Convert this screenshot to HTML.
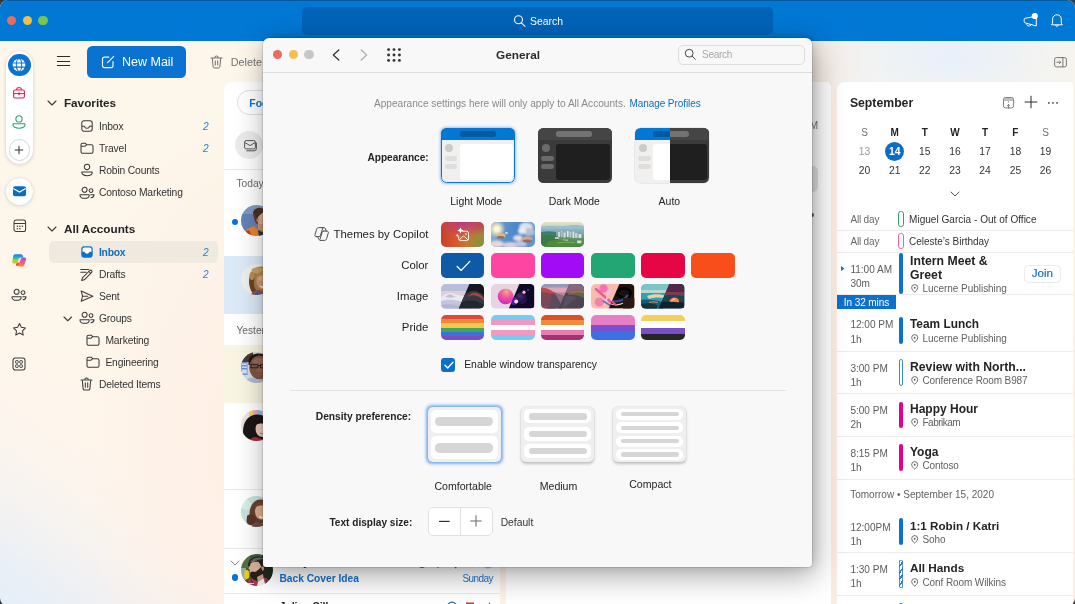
<!DOCTYPE html>
<html lang="en">
<head>
<meta charset="utf-8">
<title>Outlook - General</title>
<style>
*{box-sizing:border-box;margin:0;padding:0}
html,body{width:1075px;height:604px;overflow:hidden;background:#3a3a3a}
body{font-family:"Liberation Sans",sans-serif;color:#242424;position:relative}
.abs{position:absolute}
#win{will-change:transform;position:absolute;left:0;top:0;width:1075px;height:606px;border-radius:8px;overflow:hidden;
 background:
  radial-gradient(ellipse 170px 75px at 950px 58px,rgba(231,240,251,1),rgba(231,240,251,0) 100%),
  radial-gradient(ellipse 170px 330px at 245px 440px,rgba(255,237,227,.85),rgba(255,237,227,0) 100%),
  linear-gradient(90deg,rgba(250,228,218,0) 790px,rgba(250,230,220,.5) 826px,rgba(250,230,220,.5) 840px,rgba(250,228,218,0) 880px),
  linear-gradient(150deg,rgba(252,232,224,0) 50%,rgba(252,232,224,.4) 85%,rgba(252,232,224,.5) 100%),
  linear-gradient(35deg,#e5eef9 0%,#ebf0f6 4%,#f4f2f1 8%,#fcf5ee 12.5%,#fef6ec 17%,#fdf6ea 60%,#fcf6e9 100%);}
#tb{position:absolute;left:0;top:0;width:1075px;height:41px;background:#0078d4;box-shadow:inset 0 1px 0 rgba(20,40,60,.38)}
.tl{position:absolute;width:9.4px;height:9.4px;border-radius:50%}
#srch{position:absolute;left:302px;top:7px;width:471px;height:28px;border-radius:5px;background:#0063b8}
.t{position:absolute;white-space:nowrap;line-height:1}
svg{position:absolute;overflow:visible}
#ml{position:absolute;left:224px;top:82.3px;width:276px;height:530px;background:#fff;border-radius:8px 4px 0 0}
#rp{position:absolute;left:506px;top:82.3px;width:324.5px;height:530px;background:#fff;border-radius:4px 5px 0 0}
#cal{position:absolute;left:837px;top:82.3px;width:236px;height:530px;background:#fff;border-radius:8px 3px 0 0}
#dlg{position:absolute;left:263px;top:37.5px;width:549px;height:529px;background:#f8f8f8;border-radius:6px 6px 3px 3px;
 box-shadow:0 0 0 .5px rgba(0,0,0,.2),3px 8px 30px rgba(0,0,0,.36),2px 0 10px rgba(0,0,0,.12);overflow:hidden}
#dlg .bar{position:absolute;left:0;top:0;width:100%;height:35px;border-bottom:1px solid #dedede}

</style>
</head>
<body>
<div id="win">
<div id="tb">
<div class="tl" style="left:6.75px;top:16px;background:#e56d5b"></div>
<div class="tl" style="left:22.5px;top:16px;background:#f3bf42"></div>
<div class="tl" style="left:38.2px;top:16px;background:#74c64c"></div>
<div id="srch"></div>
<svg style="left:513px;top:14px;" width="14" height="14" viewBox="0 0 14 14" fill="none"><circle cx="5.5" cy="5.8" r="4" stroke="#fff" stroke-width="1.1"/><path d="M8.4 8.8 12 12.4" stroke="#fff" stroke-width="1.1" stroke-linecap="round"/></svg>
<div class="t" style="top:17.39px;font-size:10.4px;color:#fff;left:530px;">Search</div>
<svg style="left:1022px;top:12px;" width="16" height="16" viewBox="0 0 16 16" fill="none"><path d="M3.3 6.3 14.3 4.2V14L3.3 10.9A1.3 1.3 0 0 1 2.2 9.6V7.6A1.3 1.3 0 0 1 3.3 6.3z" stroke="#fff" stroke-width="1" stroke-linejoin="round"/><path d="M4.5 11.5c.2 1.6 1 2.5 2.3 2.5s2.2-.6 2.5-1.5" stroke="#fff" stroke-width="1"/><circle cx="12.8" cy="4" r="3.1" fill="#fff"/></svg>
<svg style="left:1049px;top:12px;" width="16" height="16" viewBox="0 0 16 16" fill="none"><path d="M3.6 11.2V7.1a4.35 4.35 0 0 1 8.7 0V11.2l1.1 1.6H2.5z" stroke="#fff" stroke-width="1" stroke-linejoin="round"/><path d="M6.5 13.1a1.5 1.5 0 0 0 2.9 0" stroke="#fff" stroke-width="1"/></svg>
</div>
<div class="abs" style="left:5.8px;top:50.8px;width:27.4px;height:113px;background:#fff;border-radius:13.7px;box-shadow:0 1px 4px rgba(0,0,0,.14),0 0 1px rgba(0,0,0,.12)"></div>
<div class="abs" style="left:8px;top:53.5px;width:22.5px;height:22.5px;background:#0a73d1;border-radius:50%"></div>
<svg style="left:12.2px;top:57.8px;" width="14" height="14" viewBox="0 0 14 14" fill="none"><circle cx="7" cy="7" r="6.3" fill="#fff"/><ellipse cx="7" cy="7" rx="2.7" ry="6.3" stroke="#0a73d1" stroke-width="1.05"/><path d="M.9 4.9h12.2M.9 9.1h12.2" stroke="#0a73d1" stroke-width="1.05"/></svg>
<svg style="left:12.2px;top:86px;" width="14" height="14" viewBox="0 0 14 14" fill="none"><rect x="1.6" y="4" width="10.8" height="8" rx="1.6" stroke="#e3194f" stroke-width="1.1"/><path d="M4.8 4V2.8a1 1 0 0 1 1-1h2.4a1 1 0 0 1 1 1V4" stroke="#e3194f" stroke-width="1.1"/><path d="M1.6 7.6h10.8" stroke="#e3194f" stroke-width="1"/><rect x="6.1" y="6.6" width="1.8" height="2.2" fill="#e3194f"/></svg>
<svg style="left:12.2px;top:114.5px;" width="14" height="14" viewBox="0 0 14 14" fill="none"><circle cx="7" cy="3.9" r="3.1" stroke="#2fa574" stroke-width="1.1"/><path d="M1.6 8.7h10.8a.6.6 0 0 1 .6.6v.3c0 2.1-2.4 3.6-6 3.6s-6-1.5-6-3.6v-.3a.6.6 0 0 1 .6-.6z" stroke="#2fa574" stroke-width="1.1" stroke-linejoin="round"/></svg>
<div class="abs" style="left:8.6px;top:139.3px;width:21.4px;height:21.4px;border:1px solid #d6d6d6;border-radius:50%;background:#fff"></div>
<svg style="left:14.2px;top:144.9px;" width="10" height="10" viewBox="0 0 10 10" fill="none"><path d="M5 .8v8.4M.8 5h8.4" stroke="#333" stroke-width="1"/></svg>
<div class="abs" style="left:5.7px;top:178px;width:27px;height:27px;background:#fff;border-radius:50%;box-shadow:0 1px 4px rgba(0,0,0,.14),0 0 1px rgba(0,0,0,.12)"></div>
<svg style="left:12.7px;top:186px;" width="13" height="11" viewBox="0 0 13 11" fill="none"><rect x="0" y="0.3" width="13" height="10" rx="2" fill="#0f6cbd"/><path d="M.3 2.6 6.5 6l6.2-3.4" stroke="#fff" stroke-width="1.1"/></svg>
<svg style="left:12.6px;top:218.8px;" width="13.6" height="13.6" viewBox="0 0 13.6 13.6" fill="none"><rect x="1" y="1" width="11.6" height="11.6" rx="2.2" stroke="#3a3a3a" stroke-width="1.05"/><path d="M1 4.5h11.6" stroke="#3a3a3a" stroke-width="1.05"/><circle cx="4.4" cy="7.2" r=".8" fill="#3a3a3a"/><circle cx="6.9" cy="7.2" r=".8" fill="#3a3a3a"/><circle cx="9.4" cy="7.2" r=".8" fill="#3a3a3a"/><circle cx="4.4" cy="9.8" r=".8" fill="#3a3a3a"/><circle cx="6.9" cy="9.8" r=".8" fill="#3a3a3a"/></svg>
<div class="abs" style="left:11.5px;top:253.3px;width:15.8px;height:13.6px;border-radius:6px;background:radial-gradient(closest-side,rgba(240,170,150,.35),rgba(240,170,150,0))"></div>
<svg style="left:12.2px;top:253.8px;" width="14.4" height="12.6" viewBox="0 0 14.4 12.6" fill="none"><defs><linearGradient id="cpa" x1="0" y1="0" x2="0" y2="1"><stop offset="0" stop-color="#1583ea"/><stop offset=".38" stop-color="#1fb7c4"/><stop offset=".68" stop-color="#9fd446"/><stop offset="1" stop-color="#fbb21c"/></linearGradient><linearGradient id="cpb" x1="0" y1="0" x2="0" y2="1"><stop offset="0" stop-color="#9a52f2"/><stop offset=".5" stop-color="#f0538f"/><stop offset="1" stop-color="#fb8f2e"/></linearGradient></defs>
<path d="M3.4.2h5.2c1.2 0 2.1.7 2.4 1.7l.6 1.9H8.6c-1 0-1.8.6-2.1 1.5l-.8 2.6C5.4 8.8 4.6 9.4 3.6 9.4H1.7C.7 9.4 0 8.5.3 7.5l1-5.8C1.6.8 2.4.2 3.4.2z" fill="url(#cpa)"/>
<path d="M5.2 8.4h2.6l-.6 2.2c-.3 1-1.1 1.6-2 1.5-1-.1-1.4-.9-1.2-1.8z" fill="#f4512c"/>
<path d="M11 12.4H7.4c-.5 0-.8-.4-.6-.9l2-6.6c.3-.9 1.1-1.5 2-1.5h1.9c1 0 1.7.9 1.4 1.9l-1.7 5.6c-.3.9-.9 1.5-1.4 1.5z" fill="url(#cpb)"/></svg>
<svg style="left:11.4px;top:287.5px;" width="16" height="14" viewBox="0 0 16 14" fill="none"><circle cx="5.6" cy="3.8" r="2.5" stroke="#3a3a3a" stroke-width="1.05"/><path d="M1 8.7h9.2v.5c0 1.9-1.8 3.1-4.6 3.1S1 11.1 1 9.2z" stroke="#3a3a3a" stroke-width="1.05" stroke-linejoin="round"/><circle cx="12" cy="4.6" r="1.9" stroke="#3a3a3a" stroke-width="1.05"/><path d="M11.8 8.7h3.2v.4c0 1.5-1.1 2.5-3 2.7" stroke="#3a3a3a" stroke-width="1.05" stroke-linecap="round" stroke-linejoin="round"/></svg>
<svg style="left:12px;top:322px;" width="15" height="15" viewBox="0 0 15 15" fill="none"><path d="M7.5 1.5 9.35 5.3l4.15.6-3 2.95.7 4.15L7.5 11.05 3.8 13l.7-4.15-3-2.95 4.15-.6z" stroke="#3a3a3a" stroke-width="1.05" stroke-linejoin="round"/></svg>
<svg style="left:12.4px;top:357px;" width="14" height="14" viewBox="0 0 14 14" fill="none"><rect x="1" y="1" width="12" height="12" rx="2.4" stroke="#3a3a3a" stroke-width="1.05"/><rect x="3.6" y="3.6" width="2.6" height="2.6" rx=".6" stroke="#3a3a3a" stroke-width=".95"/><rect x="7.8" y="3.6" width="2.6" height="2.6" rx=".6" stroke="#3a3a3a" stroke-width=".95"/><rect x="3.6" y="7.8" width="2.6" height="2.6" rx=".6" stroke="#3a3a3a" stroke-width=".95"/><rect x="7.8" y="7.8" width="2.6" height="2.6" rx=".6" stroke="#3a3a3a" stroke-width=".95"/></svg>
<svg style="left:57px;top:56px;" width="13" height="11" viewBox="0 0 13 11" fill="none"><path d="M.3 .5h12.4M.3 5.5h12.4M.3 9.5h12.4" stroke="#2b2b2b" stroke-width="1" stroke-linecap="round"/></svg>
<div class="abs" style="left:87px;top:46px;width:99px;height:31.5px;background:#0a73d1;border-radius:5.5px"></div>
<svg style="left:101px;top:55px;" width="14" height="14" viewBox="0 0 14 14" fill="none"><path d="M7.8 2.1H3.6A2.1 2.1 0 0 0 1.5 4.2v6.3a2.1 2.1 0 0 0 2.1 2.1H9.9a2.1 2.1 0 0 0 2.1-2.1V6.5" stroke="#fff" stroke-width="1.1" stroke-linecap="round"/><path d="M6.6 7.6 12.7 1.4" stroke="#fff" stroke-width="1.15" stroke-linecap="round"/></svg>
<div class="t" style="top:56.08px;font-size:12.5px;color:#fff;letter-spacing:0px;left:122px;">New Mail</div>
<svg style="left:209.6px;top:54.6px;" width="13" height="14" viewBox="0 0 13 14" fill="none"><path d="M1 3h11" stroke="#666" stroke-width="0.95" stroke-linecap="round"/><path d="M4.7 2.8a1.8 1.8 0 0 1 3.6 0" stroke="#666" stroke-width="0.95"/><path d="M2.3 3.2l.8 8.4a1.5 1.5 0 0 0 1.5 1.4h3.8a1.5 1.5 0 0 0 1.5-1.4l.8-8.4" stroke="#666" stroke-width="0.95" stroke-linejoin="round"/><path d="M5.3 5.8v4.4M7.7 5.8v4.4" stroke="#666" stroke-width="0.95" stroke-linecap="round"/></svg>
<div class="t" style="top:56.89px;font-size:10.8px;color:#727272;left:230.8px;">Delete</div>
<svg style="left:48.3px;top:101.3px;" width="8" height="4" viewBox="0 0 8 4" fill="none"><path d="M0 0 4 4 8 0" stroke="#3a3a3a" stroke-width="1.1" stroke-linecap="round" stroke-linejoin="round"/></svg>
<div class="t" style="top:96.74px;font-size:11.75px;color:#242424;font-weight:700;left:63.9px;">Favorites</div>
<svg style="left:48.3px;top:227.3px;" width="8" height="4" viewBox="0 0 8 4" fill="none"><path d="M0 0 4 4 8 0" stroke="#3a3a3a" stroke-width="1.1" stroke-linecap="round" stroke-linejoin="round"/></svg>
<div class="t" style="top:222.74px;font-size:11.75px;color:#242424;font-weight:700;left:63.9px;">All Accounts</div>
<div class="abs" style="left:49px;top:241.4px;width:168.5px;height:21.5px;background:#efe9e0;border-radius:5px"></div>
<svg style="left:80.6px;top:120.4px;" width="12" height="12" viewBox="0 0 12 12" fill="none"><rect x=".8" y=".8" width="10.4" height="10.4" rx="2.2" stroke="#3a3a3a" stroke-width="1.05"/><path d="M.8 6.3h2.7c.2 1.2 1.2 2 2.5 2s2.3-.8 2.5-2h2.7" stroke="#3a3a3a" stroke-width="1.05" stroke-linejoin="round"/></svg>
<div class="t" style="top:122.34px;font-size:10.3px;color:#333;letter-spacing:-0.16px;left:99px;">Inbox</div>
<div class="t" style="top:122.28px;font-size:10.2px;color:#2b7cd3;left:203px;font-style:italic;">2</div>
<svg style="left:80px;top:142.3px;" width="14" height="12" viewBox="0 0 14 12" fill="none"><path d="M1 2.8a1.6 1.6 0 0 1 1.6-1.6h2.6l1.5 1.5h4.7A1.6 1.6 0 0 1 13 4.3v5.4a1.6 1.6 0 0 1-1.6 1.6H2.6A1.6 1.6 0 0 1 1 9.7z" stroke="#3a3a3a" stroke-width="1.05" stroke-linejoin="round"/><path d="M1 4.3h3.8l1.9-1.6" stroke="#3a3a3a" stroke-width="1.05" stroke-linejoin="round"/></svg>
<div class="t" style="top:144.24px;font-size:10.3px;color:#333;letter-spacing:-0.16px;left:99px;">Travel</div>
<div class="t" style="top:144.18px;font-size:10.2px;color:#2b7cd3;left:203px;font-style:italic;">2</div>
<svg style="left:79.6px;top:163.2px;" width="14" height="14" viewBox="0 0 14 14" fill="none"><circle cx="7" cy="3.9" r="2.7" stroke="#3a3a3a" stroke-width="1.05"/><path d="M1.8 8.9h10.4v.6c0 1.9-2.1 3.2-5.2 3.2s-5.2-1.3-5.2-3.2z" stroke="#3a3a3a" stroke-width="1.05" stroke-linejoin="round"/></svg>
<div class="t" style="top:166.34px;font-size:10.3px;color:#333;letter-spacing:-0.16px;left:99px;">Robin Counts</div>
<svg style="left:79px;top:185.6px;" width="16" height="14" viewBox="0 0 16 14" fill="none"><circle cx="5.6" cy="3.8" r="2.5" stroke="#3a3a3a" stroke-width="1.05"/><path d="M1 8.7h9.2v.5c0 1.9-1.8 3.1-4.6 3.1S1 11.1 1 9.2z" stroke="#3a3a3a" stroke-width="1.05" stroke-linejoin="round"/><circle cx="12" cy="4.6" r="1.9" stroke="#3a3a3a" stroke-width="1.05"/><path d="M11.8 8.7h3.2v.4c0 1.5-1.1 2.5-3 2.7" stroke="#3a3a3a" stroke-width="1.05" stroke-linecap="round" stroke-linejoin="round"/></svg>
<div class="t" style="top:188.34px;font-size:10.3px;color:#333;letter-spacing:-0.16px;left:99px;">Contoso Marketing</div>
<svg style="left:80.6px;top:246.1px;" width="12" height="12" viewBox="0 0 12 12" fill="none"><rect x=".9" y=".9" width="10.2" height="10.2" rx="2.3" fill="#fff" stroke="#0d6fce" stroke-width="1.2"/><path d="M.9 5.8h2.6c.2 1.1 1.2 1.9 2.5 1.9s2.3-.8 2.5-1.9h2.6v3a2.3 2.3 0 0 1-2.3 2.3H3.2A2.3 2.3 0 0 1 .9 8.8z" fill="#0d6fce"/></svg>
<div class="t" style="top:248.04px;font-size:10.3px;color:#0f6cbd;font-weight:700;letter-spacing:-0.25px;left:99px;">Inbox</div>
<div class="t" style="top:247.98px;font-size:10.2px;color:#2b7cd3;left:203px;font-style:italic;">2</div>
<svg style="left:79.5px;top:267.5px;" width="14" height="13" viewBox="0 0 14 13" fill="none"><path d="M4.3 11.8l-2.6.7.7-2.6 7.4-7.4a1.35 1.35 0 0 1 1.9 1.9z" stroke="#3a3a3a" stroke-width="1.05" stroke-linejoin="round"/><path d="M.8 1.5h8M.8 4.3h5.4M8.8 3.5l1.9 1.9" stroke="#3a3a3a" stroke-width="1.05" stroke-linecap="round"/></svg>
<div class="t" style="top:270.14px;font-size:10.3px;color:#333;letter-spacing:-0.16px;left:99px;">Drafts</div>
<div class="t" style="top:270.08px;font-size:10.2px;color:#2b7cd3;left:203px;font-style:italic;">2</div>
<svg style="left:80px;top:290px;" width="14" height="12.4" viewBox="0 0 14 12.4" fill="none"><path d="M1.2 1.1 12.8 6.2 1.2 11.3 2.6 6.2z" stroke="#3a3a3a" stroke-width="1.05" stroke-linejoin="round"/><path d="M2.6 6.2h5.2" stroke="#3a3a3a" stroke-width="1.05" stroke-linecap="round"/></svg>
<div class="t" style="top:292.14px;font-size:10.3px;color:#333;letter-spacing:-0.16px;left:99px;">Sent</div>
<svg style="left:63.849999999999994px;top:316.725px;" width="7.5" height="3.75" viewBox="0 0 7.5 3.75" fill="none"><path d="M0 0 3.75 3.75 7.5 0" stroke="#3a3a3a" stroke-width="1.1" stroke-linecap="round" stroke-linejoin="round"/></svg>
<svg style="left:79px;top:311.4px;" width="16" height="14" viewBox="0 0 16 14" fill="none"><circle cx="5.6" cy="3.8" r="2.5" stroke="#3a3a3a" stroke-width="1.05"/><path d="M1 8.7h9.2v.5c0 1.9-1.8 3.1-4.6 3.1S1 11.1 1 9.2z" stroke="#3a3a3a" stroke-width="1.05" stroke-linejoin="round"/><circle cx="12" cy="4.6" r="1.9" stroke="#3a3a3a" stroke-width="1.05"/><path d="M11.8 8.7h3.2v.4c0 1.5-1.1 2.5-3 2.7" stroke="#3a3a3a" stroke-width="1.05" stroke-linecap="round" stroke-linejoin="round"/></svg>
<div class="t" style="top:314.14px;font-size:10.3px;color:#333;letter-spacing:-0.16px;left:99px;">Groups</div>
<svg style="left:85.5px;top:334.2px;" width="14" height="12" viewBox="0 0 14 12" fill="none"><path d="M1 2.8a1.6 1.6 0 0 1 1.6-1.6h2.6l1.5 1.5h4.7A1.6 1.6 0 0 1 13 4.3v5.4a1.6 1.6 0 0 1-1.6 1.6H2.6A1.6 1.6 0 0 1 1 9.7z" stroke="#3a3a3a" stroke-width="1.05" stroke-linejoin="round"/><path d="M1 4.3h3.8l1.9-1.6" stroke="#3a3a3a" stroke-width="1.05" stroke-linejoin="round"/></svg>
<div class="t" style="top:336.14px;font-size:10.3px;color:#333;letter-spacing:-0.16px;left:105.4px;">Marketing</div>
<svg style="left:85.5px;top:356.3px;" width="14" height="12" viewBox="0 0 14 12" fill="none"><path d="M1 2.8a1.6 1.6 0 0 1 1.6-1.6h2.6l1.5 1.5h4.7A1.6 1.6 0 0 1 13 4.3v5.4a1.6 1.6 0 0 1-1.6 1.6H2.6A1.6 1.6 0 0 1 1 9.7z" stroke="#3a3a3a" stroke-width="1.05" stroke-linejoin="round"/><path d="M1 4.3h3.8l1.9-1.6" stroke="#3a3a3a" stroke-width="1.05" stroke-linejoin="round"/></svg>
<div class="t" style="top:358.24px;font-size:10.3px;color:#333;letter-spacing:-0.16px;left:105.4px;">Engineering</div>
<svg style="left:80px;top:377.2px;" width="13" height="14" viewBox="0 0 13 14" fill="none"><path d="M1 3h11" stroke="#3a3a3a" stroke-width="1.05" stroke-linecap="round"/><path d="M4.7 2.8a1.8 1.8 0 0 1 3.6 0" stroke="#3a3a3a" stroke-width="1.05"/><path d="M2.3 3.2l.8 8.4a1.5 1.5 0 0 0 1.5 1.4h3.8a1.5 1.5 0 0 0 1.5-1.4l.8-8.4" stroke="#3a3a3a" stroke-width="1.05" stroke-linejoin="round"/><path d="M5.3 5.8v4.4M7.7 5.8v4.4" stroke="#3a3a3a" stroke-width="1.05" stroke-linecap="round"/></svg>
<div class="t" style="top:380.24px;font-size:10.3px;color:#333;letter-spacing:-0.16px;left:99px;">Deleted Items</div>
<svg style="left:1053.5px;top:56.5px;" width="13" height="10.5" viewBox="0 0 13 10.5" fill="none"><rect x=".6" y=".6" width="11.8" height="9.3" rx="1.8" stroke="#6a6a6a" stroke-width=".9"/><path d="M8.9.6v9.3" stroke="#6a6a6a" stroke-width=".9"/><path d="M2.8 5.25h3.8M5.3 3.8l1.4 1.45-1.4 1.45" stroke="#6a6a6a" stroke-width=".85" stroke-linecap="round" stroke-linejoin="round"/></svg>
<div id="ml"></div>
<div id="rp"></div>
<div id="cal"></div>
<div class="abs" style="left:236.6px;top:90.3px;width:140px;height:24.3px;border:1px solid #e0e0e0;border-radius:12.25px;background:#fff"></div>
<div class="t" style="top:98.24px;font-size:10.5px;color:#1370cf;font-weight:700;left:249.3px;">Focused</div>
<div class="abs" style="left:234.7px;top:131.2px;width:28px;height:28px;background:#ebebeb;border-radius:50%"></div>
<svg style="left:244px;top:139.8px;" width="13" height="11.5" viewBox="0 0 13 11.5" fill="none"><rect x=".6" y=".6" width="10.8" height="8.3" rx="1.6" stroke="#555" stroke-width="1"/><path d="M.8 2.5 6 5.6l5.2-3.1" stroke="#555" stroke-width="1" stroke-linejoin="round"/><path d="M2.8 10.8h7.4a2.2 2.2 0 0 0 2.2-2.2V3" stroke="#555" stroke-width="1" stroke-linecap="round"/></svg>
<div class="abs" style="left:224px;top:168.6px;width:276px;height:1px;background:#e8e8e8"></div>
<div class="t" style="top:179.38px;font-size:10.2px;color:#6a6a6a;left:236.5px;">Today</div>
<div class="abs" style="left:231.8px;top:218.5px;width:6.6px;height:6.6px;background:#0a73d1;border-radius:50%"></div>
<svg style="left:240.7px;top:205.4px;" width="31" height="31" viewBox="0 0 31 31" fill="none"><defs><clipPath id="av1"><circle cx="15.5" cy="15.5" r="15.5"/></clipPath><filter id="avb1" x="-10%" y="-10%" width="120%" height="120%"><feGaussianBlur stdDeviation=".55"/></filter></defs><g clip-path="url(#av1)"><g filter="url(#avb1)"><rect width="31" height="31" fill="#6482b4"/><rect width="31" height="9" fill="#7f98c2"/>
<ellipse cx="18.5" cy="8" rx="6.5" ry="5.2" fill="#47301f"/><path d="M12.5 9c0 4 1 8 3.5 10l3-3V8z" fill="#5a3a26"/>
<ellipse cx="22.5" cy="14.5" rx="6.2" ry="7.6" fill="#dcae90"/><ellipse cx="16.8" cy="15" rx="1.3" ry="2" fill="#c48e70"/>
<path d="M17 19h8v6h-8z" fill="#c99474"/>
<path d="M14 10c1-4 4-6 8-6 3 0 5 1 6 3-3-.5-6 0-8 2-2 1.5-3 3-3.5 5z" fill="#4a3222"/>
<path d="M2 31c1-5 5-8 11-10l5 5 8-3c3 1 5 4 5 8z" fill="#e9832a"/><path d="M2 31c1-3 3-5 6-6l3 6z" fill="#c23a26"/>
<path d="M17 25l4 2 6-3 4 3v4H18z" fill="#27304f"/></g></g></svg>
<div class="abs" style="left:224px;top:256.2px;width:276px;height:58.3px;background:#dce9f6"></div>
<svg style="left:240.7px;top:263.9px;" width="31" height="31" viewBox="0 0 31 31" fill="none"><defs><clipPath id="av2"><circle cx="15.5" cy="15.5" r="15.5"/></clipPath><filter id="avb2" x="-10%" y="-10%" width="120%" height="120%"><feGaussianBlur stdDeviation=".55"/></filter></defs><g clip-path="url(#av2)"><g filter="url(#avb2)"><rect width="31" height="31" fill="#eef0ef"/>
<ellipse cx="20" cy="16" rx="12" ry="13.5" fill="#a67a48"/>
<path d="M8.5 14c-1 5 0 11 3 15l4-2c-3-4-3-9-2-13z" fill="#6b4524"/><ellipse cx="17" cy="6.5" rx="6.5" ry="3.2" fill="#caa064"/><ellipse cx="11" cy="12" rx="2.5" ry="4" fill="#b88c54"/>
<ellipse cx="22.5" cy="17" rx="7.2" ry="8.6" fill="#cf9a72"/><ellipse cx="21" cy="14" rx="4" ry="3" fill="#dcab84"/>
<path d="M14.5 13c2-4.5 6-6.5 10.5-5.5 2.5.5 4.5 2 5.5 4.5-3-1.5-7-1.5-10-.5s-4.5 1.5-6 1.5z" fill="#b48850"/>
<path d="M18.5 21c2 1.6 5.5 1.6 7.5 0-1 2.2-2.2 3.2-3.8 3.2S19.5 23.2 18.5 21z" fill="#f5efea"/>
<path d="M10 31c1-3 4-5 8-5l5 2 6-2 2 5z" fill="#94505a"/><path d="M14 31l2-4 3 4z" fill="#4a5c8e"/></g></g></svg>
<div class="t" style="top:326.18px;font-size:10.2px;color:#6a6a6a;left:236.5px;">Yesterday</div>
<div class="abs" style="left:224px;top:344.8px;width:276px;height:58px;background:#f9f5e3"></div>
<svg style="left:240.7px;top:351.9px;" width="31" height="31" viewBox="0 0 31 31" fill="none"><defs><clipPath id="av3"><circle cx="15.5" cy="15.5" r="15.5"/></clipPath><filter id="avb3" x="-10%" y="-10%" width="120%" height="120%"><feGaussianBlur stdDeviation=".55"/></filter></defs><g clip-path="url(#av3)"><g filter="url(#avb3)"><rect width="31" height="31" fill="#d5dbe2"/><rect width="12" height="10" fill="#4a3a34"/>
<rect x="0" y="10" width="6.5" height="13" fill="#6f8fd6"/><rect x=".8" y="11.5" width="5" height="1.3" fill="#eef2fb"/><rect x=".8" y="14.5" width="5" height="1.3" fill="#e6ecf8"/><rect x=".8" y="17.5" width="5" height="4" fill="#d4def4"/>
<path d="M7.5 10c0-5.5 4-8.5 10.5-8.5S29 4.5 29 10v3H7.5z" fill="#211815"/>
<ellipse cx="18.5" cy="15.5" rx="10.3" ry="12" fill="#7f5542"/><ellipse cx="18.5" cy="9.5" rx="7" ry="3.6" fill="#99695a"/><ellipse cx="18.5" cy="18" rx="3.2" ry="2.6" fill="#936450"/>
<path d="M10 12.4h7v3.4h-7zM19.5 12.4h7v3.4h-7zM17 13.5h2.5" fill="none" stroke="#1a1412" stroke-width=".75"/>
<path d="M15.5 22.5h6" stroke="#9a5652" stroke-width="1.3"/>
<path d="M3 31c1-3 4-5 8-5.5l7.5 2.5 8-2.5 4 1.5v4z" fill="#b0bbcf"/></g></g></svg>
<svg style="left:240.7px;top:410.2px;" width="31" height="31" viewBox="0 0 31 31" fill="none"><defs><clipPath id="av4"><circle cx="15.5" cy="15.5" r="15.5"/></clipPath><filter id="avb4" x="-10%" y="-10%" width="120%" height="120%"><feGaussianBlur stdDeviation=".55"/></filter></defs><g clip-path="url(#av4)"><g filter="url(#avb4)"><rect width="31" height="31" fill="#e9e4e1"/><rect x="8" y="0" width="4" height="6" fill="#f1d262"/><rect x="12" y="0" width="4" height="6" fill="#f0a3b4"/><rect x="16" y="0" width="5" height="6" fill="#93bbe4"/>
<path d="M3 29C0 17 4 5 16 4.5c10 0 15 8 13 19l-2 7.5H5z" fill="#1b1316"/>
<ellipse cx="21.5" cy="19" rx="7" ry="8" fill="#edcdbd"/>
<path d="M13 15.5c0-6 4-9 9-9s8 4 8 9c-3-1.5-6-2-9-2s-5 .5-8 2z" fill="#1b1316"/>
<path d="M19 23c1.5 1 3.5 1 5 0" stroke="#c26a6e" stroke-width="1" fill="none"/>
<path d="M8 31c1-2.5 4-4 7-4l6 2 6-2 3 1v3z" fill="#a62f3a"/></g></g></svg>
<div class="abs" style="left:224px;top:488.6px;width:276px;height:1px;background:#e8e8e8"></div>
<svg style="left:240.7px;top:496.3px;" width="31" height="31" viewBox="0 0 31 31" fill="none"><defs><clipPath id="av5"><circle cx="15.5" cy="15.5" r="15.5"/></clipPath><filter id="avb5" x="-10%" y="-10%" width="120%" height="120%"><feGaussianBlur stdDeviation=".55"/></filter></defs><g clip-path="url(#av5)"><g filter="url(#avb5)"><rect width="31" height="31" fill="#c6e3dc"/><circle cx="5" cy="9" r="5" fill="#d9eee8"/>
<path d="M9 24C7 13 11 3.5 20 3.5c8 0 11 7 10 15l-2 9H10z" fill="#69402f"/>
<path d="M6 20c2-2 5-2 7 0s2 6 0 8-6 1-7-1 0-5 0-7z" fill="#5a3426"/>
<ellipse cx="20.5" cy="15.5" rx="6.5" ry="8" fill="#e0b192"/>
<path d="M13.5 12c1-5 5-7 9-6 3 .5 5 3 5.5 6-3-2-5-2.5-8-2.5s-4.5 1-6.5 2.5z" fill="#744634"/>
<path d="M17.5 19.5c2 1.5 4.5 1.5 6.5 0-1 2-2 3-3.3 3s-2.4-1-3.2-3z" fill="#f6efea"/>
<path d="M10 31c1-3 4-5 7-5l4 1.5 5-1.5 4 2v3z" fill="#6a5048"/></g></g></svg>
<div class="abs" style="left:224px;top:547.6px;width:276px;height:1px;background:#e8e8e8"></div>
<svg style="left:230.5px;top:560.9px;" width="8" height="4" viewBox="0 0 8 4" fill="none"><path d="M0 0 4 4 8 0" stroke="#777" stroke-width="0.9" stroke-linecap="round" stroke-linejoin="round"/></svg>
<div class="abs" style="left:231.5px;top:574.4px;width:6.6px;height:6.6px;background:#0a73d1;border-radius:50%"></div>
<svg style="left:241px;top:554.4px;" width="32" height="32" viewBox="0 0 32 32" fill="none"><defs><clipPath id="av6"><circle cx="16" cy="16" r="16"/></clipPath><filter id="avb6" x="-10%" y="-10%" width="120%" height="120%"><feGaussianBlur stdDeviation=".55"/></filter></defs><g clip-path="url(#av6)"><g filter="url(#avb6)"><rect width="32" height="32" fill="#3f5f36"/><rect x="21" y="0" width="11" height="32" fill="#1b2b1e"/><rect x="0" y="0" width="9" height="14" fill="#56703e"/><rect x="0" y="14" width="5" height="12" fill="#8fb0a0"/><ellipse cx="5.8" cy="20.5" rx="2.6" ry="4.6" fill="#f5c814"/>
<path d="M7 12c0-6 4-9.5 10-9.5S27 6 27 12v9l-4 1-2-9z" fill="#2a2626"/><path d="M9 8c2-3 5-4.5 9-4.5 2 0 4 .5 5 1.5-4 0-8 1-11 4z" fill="#6a6866"/>
<path d="M9.5 9.5c2-1.5 5-2 8-1.5 2 2 3 5 3 8l.5 5-4 3-6-1-2.5-5 .5-2-1.5-1.5 1.5-2.5z" fill="#d9b49b"/>
<ellipse cx="21.5" cy="14.5" rx="1.5" ry="2.3" fill="#c99b82"/>
<path d="M9.5 18c1.5-.8 3-.8 4.5 0 2-1 4-2.5 6-5l1.5 5c0 4-2.5 8-6 8.5-3 .3-5.5-2-6.5-5z" fill="#26201e"/>
<path d="M16 23l6-3 1 7-6 1z" fill="#c9a088"/>
<path d="M3 32c1-4 4-6.5 8-7.5l6 4 6-5c4 1 7 4 8 8.5z" fill="#b43848"/><path d="M16 32l1-4 5.5-4 2 8z" fill="#ececee"/><path d="M6 27l3 5M10 25.5l3 6.5M26 25l-1.5 7" stroke="#2c3658" stroke-width="1.1"/><path d="M4 29.5h9" stroke="#e9d0d4" stroke-width=".9"/></g></g></svg>
<div class="t" style="top:557.24px;font-size:10.5px;color:#242424;font-weight:700;left:279.4px;">Henry Brill</div>
<div class="t" style="top:573.77px;font-size:10.23px;color:#1370cf;font-weight:700;left:279.4px;">Back Cover Idea</div>
<div class="t" style="top:573.88px;font-size:10px;color:#2277d2;letter-spacing:-0.55px;left:93px;width:400px;text-align:right;">Sunday</div>
<svg style="left:416px;top:557px;" width="80" height="12" viewBox="0 0 80 12" fill="none"><circle cx="6" cy="6" r="4.5" stroke="#0f6cbd" stroke-width="1.2"/><path d="M22 1v10" stroke="#d13438" stroke-width="1.2"/><path d="M22 1.5h6v5h-6z" fill="#d13438"/><path d="M40 2l4 4-5 5" stroke="#555" stroke-width="1.2"/><path d="M56 10l4-8 3 8" stroke="#555" stroke-width="1.2"/><circle cx="72" cy="6" r="5.5" fill="#a9c8ea"/></svg>
<div class="abs" style="left:224px;top:593px;width:276px;height:1px;background:#e8e8e8"></div>
<div class="t" style="top:601.04px;font-size:10.5px;color:#242424;font-weight:700;left:279.4px;">Julian Silk</div>
<svg style="left:446px;top:600.8px;" width="50" height="12" viewBox="0 0 50 12" fill="none"><circle cx="6" cy="6" r="4.8" stroke="#0f6cbd" stroke-width="1.2"/><path d="M20 1.5h8v6h-8z" fill="#d13438"/><path d="M40 10l3.5-9 3.5 9z" fill="#0f6cbd"/></svg>
<div class="t" style="top:120.88px;font-size:10px;color:#777;left:809.8px;">M</div>
<div class="abs" style="left:790px;top:166px;width:28px;height:26px;background:#e6e6e6;border-radius:5px"></div>
<div class="abs" style="left:809px;top:212.5px;width:5px;height:4px;background:#555;border-radius:2px"></div>
<div class="t" style="top:96.8px;font-size:12.25px;color:#242424;font-weight:700;left:849.9px;">September</div>
<svg style="left:1003.1px;top:97px;" width="11.1" height="11.4" viewBox="0 0 11.1 11.4" fill="none"><rect x=".5" y=".5" width="10.1" height="10.4" rx="2" stroke="#6e6e6e" stroke-width=".9"/><path d="M.5 3h10.1" stroke="#6e6e6e" stroke-width=".9"/><path d="M.9 1.7h9.3" stroke="#bdbdbd" stroke-width="1.2"/><circle cx="5.55" cy="4.9" r=".55" fill="#6e6e6e"/><path d="M5.55 11.3V7.6M4.3 8.7l1.25-1.25L6.8 8.7" stroke="#6e6e6e" stroke-width=".85" stroke-linecap="round" stroke-linejoin="round"/></svg>
<svg style="left:1024.5px;top:96.4px;" width="12" height="12" viewBox="0 0 12 12" fill="none"><path d="M6 .2v11.6M.1 6h11.8" stroke="#2b2b2b" stroke-width="1" stroke-linecap="round"/></svg>
<svg style="left:1047.8px;top:101.8px;" width="11" height="3" viewBox="0 0 11 3" fill="none"><rect x="0" y="0" width="1.7" height="1.7" rx=".5" fill="#555"/><rect x="4.1" y="0" width="1.7" height="1.7" rx=".5" fill="#555"/><rect x="8.2" y="0" width="1.7" height="1.7" rx=".5" fill="#555"/></svg>
<div class="t" style="top:127.88px;font-size:10px;color:#707070;left:714.5px;width:300px;text-align:center;">S</div>
<div class="t" style="top:127.88px;font-size:10px;color:#242424;font-weight:700;left:744.7px;width:300px;text-align:center;">M</div>
<div class="t" style="top:127.88px;font-size:10px;color:#242424;font-weight:700;left:774.8px;width:300px;text-align:center;">T</div>
<div class="t" style="top:127.88px;font-size:10px;color:#242424;font-weight:700;left:805.1px;width:300px;text-align:center;">W</div>
<div class="t" style="top:127.88px;font-size:10px;color:#242424;font-weight:700;left:835px;width:300px;text-align:center;">T</div>
<div class="t" style="top:127.88px;font-size:10px;color:#242424;font-weight:700;left:865.4px;width:300px;text-align:center;">F</div>
<div class="t" style="top:127.88px;font-size:10px;color:#707070;left:895.5px;width:300px;text-align:center;">S</div>
<div class="abs" style="left:885.1px;top:142.1px;width:19.2px;height:19.2px;background:#0c6dc6;border-radius:50%"></div>
<div class="t" style="top:147.14px;font-size:10.3px;color:#9a9a9a;left:714.5px;width:300px;text-align:center;">13</div>
<div class="t" style="top:147.14px;font-size:10.3px;color:#fff;font-weight:700;left:744.7px;width:300px;text-align:center;">14</div>
<div class="t" style="top:147.14px;font-size:10.3px;color:#333;left:774.8px;width:300px;text-align:center;">15</div>
<div class="t" style="top:147.14px;font-size:10.3px;color:#333;left:805.1px;width:300px;text-align:center;">16</div>
<div class="t" style="top:147.14px;font-size:10.3px;color:#333;left:835px;width:300px;text-align:center;">17</div>
<div class="t" style="top:147.14px;font-size:10.3px;color:#333;left:865.4px;width:300px;text-align:center;">18</div>
<div class="t" style="top:147.14px;font-size:10.3px;color:#333;left:895.5px;width:300px;text-align:center;">19</div>
<div class="t" style="top:166.04px;font-size:10.3px;color:#333;left:714.5px;width:300px;text-align:center;">20</div>
<div class="t" style="top:166.04px;font-size:10.3px;color:#333;left:744.7px;width:300px;text-align:center;">21</div>
<div class="t" style="top:166.04px;font-size:10.3px;color:#333;left:774.8px;width:300px;text-align:center;">22</div>
<div class="t" style="top:166.04px;font-size:10.3px;color:#333;left:805.1px;width:300px;text-align:center;">23</div>
<div class="t" style="top:166.04px;font-size:10.3px;color:#333;left:835px;width:300px;text-align:center;">24</div>
<div class="t" style="top:166.04px;font-size:10.3px;color:#333;left:865.4px;width:300px;text-align:center;">25</div>
<div class="t" style="top:166.04px;font-size:10.3px;color:#333;left:895.5px;width:300px;text-align:center;">26</div>
<svg style="left:951.1px;top:192px;" width="8" height="4" viewBox="0 0 8 4" fill="none"><path d="M0 0 4 4 8 0" stroke="#555" stroke-width="1" stroke-linecap="round" stroke-linejoin="round"/></svg>
<div class="t" style="top:215.08px;font-size:10px;color:#6a6a6a;letter-spacing:-0.17px;left:850.4px;">All day</div>
<div class="abs" style="left:898.1px;top:211.2px;width:5.6px;height:15.6px;border:1px solid #3d9b62;border-radius:2.8px"></div>
<div class="t" style="top:214.64px;font-size:10.09px;color:#333;left:909px;">Miguel Garcia - Out of Office</div>
<div class="abs" style="left:837px;top:230px;width:236px;height:1px;background:#ececec"></div>
<div class="t" style="top:236.88px;font-size:10px;color:#6a6a6a;letter-spacing:-0.17px;left:850.4px;">All day</div>
<div class="abs" style="left:898.1px;top:233.4px;width:5.6px;height:15.4px;border:1px solid #ee5fa7;border-radius:2.8px"></div>
<div class="t" style="top:236.58px;font-size:10px;color:#333;letter-spacing:-0.02px;left:909px;">Celeste’s Birthday</div>
<div class="abs" style="left:837px;top:252px;width:236px;height:1px;background:#ececec"></div>
<svg style="left:840.5px;top:266.3px;" width="3.4" height="5" viewBox="0 0 3.4 5" fill="none"><path d="M0 0 3.4 2.5 0 5z" fill="#0d70d0"/></svg>
<div class="t" style="top:265.16px;font-size:10.05px;color:#5c5c5c;left:850.4px;">11:00 AM</div>
<div class="t" style="top:279.06px;font-size:10.05px;color:#5c5c5c;left:850.4px;">30m</div>
<div class="abs" style="left:898.6px;top:253.4px;width:4.7px;height:40.5px;background:#0d70d0;border-radius:2.4px"></div>
<div class="t" style="top:254.9px;font-size:12.25px;color:#242424;font-weight:700;left:910px;">Intern Meet &amp;</div>
<div class="t" style="top:268.6px;font-size:12.25px;color:#242424;font-weight:700;left:910px;">Greet</div>
<svg style="left:910.5px;top:283.7px;" width="7.4" height="8.8" viewBox="0 0 7.4 8.8" fill="none"><path d="M3.7.6A3.05 3.05 0 0 0 .65 3.65C.65 5.7 3.7 8.2 3.7 8.2s3.05-2.5 3.05-4.55A3.05 3.05 0 0 0 3.7.6z" stroke="#5c5c5c" stroke-width=".9" stroke-linejoin="round"/><circle cx="3.7" cy="3.7" r=".95" fill="#5c5c5c"/></svg>
<div class="t" style="top:283.68px;font-size:10px;color:#616161;letter-spacing:-0.04px;left:922.5px;">Lucerne Publishing</div>
<div class="abs" style="left:1024.3px;top:264.6px;width:36.4px;height:18px;border:1px solid #ebebeb;border-radius:4.5px;background:#fff"></div>
<div class="t" style="top:267.11px;font-size:11.6px;color:#1171d0;left:892.3px;width:300px;text-align:center;-webkit-text-stroke:.2px #1171d0;">Join</div>
<div class="abs" style="left:837px;top:294.2px;width:236px;height:1px;background:#ececec"></div>
<div class="abs" style="left:837px;top:295.2px;width:59.1px;height:13.6px;background:#0d6fce"></div>
<div class="t" style="top:297.98px;font-size:10px;color:#fff;letter-spacing:-0.06px;left:843.7px;">In 32 mins</div>
<div class="t" style="top:320.26px;font-size:10.05px;color:#5c5c5c;left:850.4px;">12:00 PM</div>
<div class="t" style="top:334.66px;font-size:10.05px;color:#5c5c5c;left:850.4px;">1h</div>
<div class="abs" style="left:898.6px;top:317.3px;width:4.7px;height:26.30000000000001px;background:#0d70d0;border-radius:2.4px"></div>
<div class="t" style="top:319.28px;font-size:11.86px;color:#242424;font-weight:700;left:910px;">Team Lunch</div>
<svg style="left:910.5px;top:333.7px;" width="7.4" height="8.8" viewBox="0 0 7.4 8.8" fill="none"><path d="M3.7.6A3.05 3.05 0 0 0 .65 3.65C.65 5.7 3.7 8.2 3.7 8.2s3.05-2.5 3.05-4.55A3.05 3.05 0 0 0 3.7.6z" stroke="#5c5c5c" stroke-width=".9" stroke-linejoin="round"/><circle cx="3.7" cy="3.7" r=".95" fill="#5c5c5c"/></svg>
<div class="t" style="top:333.68px;font-size:10px;color:#616161;letter-spacing:-0.04px;left:922.5px;">Lucerne Publishing</div>
<div class="abs" style="left:837px;top:351px;width:236px;height:1px;background:#ececec"></div>
<div class="t" style="top:364.26px;font-size:10.05px;color:#5c5c5c;left:850.4px;">3:00 PM</div>
<div class="t" style="top:377.76px;font-size:10.05px;color:#5c5c5c;left:850.4px;">1h</div>
<div class="abs" style="left:898.6px;top:359.4px;width:4.7px;height:26.600000000000023px;border:1px solid #3a8ddb;border-radius:2.4px;background:#fff"></div>
<div class="t" style="top:360.61px;font-size:12.21px;color:#242424;font-weight:700;left:910px;">Review with North...</div>
<svg style="left:910.5px;top:376.09999999999997px;" width="7.4" height="8.8" viewBox="0 0 7.4 8.8" fill="none"><path d="M3.7.6A3.05 3.05 0 0 0 .65 3.65C.65 5.7 3.7 8.2 3.7 8.2s3.05-2.5 3.05-4.55A3.05 3.05 0 0 0 3.7.6z" stroke="#5c5c5c" stroke-width=".9" stroke-linejoin="round"/><circle cx="3.7" cy="3.7" r=".95" fill="#5c5c5c"/></svg>
<div class="t" style="top:376.08px;font-size:10px;color:#616161;letter-spacing:-0.115px;left:922.5px;">Conference Room B987</div>
<div class="abs" style="left:837px;top:393.2px;width:236px;height:1px;background:#ececec"></div>
<div class="t" style="top:405.86px;font-size:10.05px;color:#5c5c5c;left:850.4px;">5:00 PM</div>
<div class="t" style="top:420.06px;font-size:10.05px;color:#5c5c5c;left:850.4px;">2h</div>
<div class="abs" style="left:898.6px;top:402.1px;width:4.7px;height:26.099999999999966px;background:#e3008c;border-radius:2.4px"></div>
<div class="t" style="top:402.92px;font-size:12px;color:#242424;font-weight:700;left:910px;">Happy Hour</div>
<svg style="left:910.5px;top:418.3px;" width="7.4" height="8.8" viewBox="0 0 7.4 8.8" fill="none"><path d="M3.7.6A3.05 3.05 0 0 0 .65 3.65C.65 5.7 3.7 8.2 3.7 8.2s3.05-2.5 3.05-4.55A3.05 3.05 0 0 0 3.7.6z" stroke="#5c5c5c" stroke-width=".9" stroke-linejoin="round"/><circle cx="3.7" cy="3.7" r=".95" fill="#5c5c5c"/></svg>
<div class="t" style="top:418.28px;font-size:10px;color:#616161;letter-spacing:-0.5px;left:922.5px;">Fabrikam</div>
<div class="abs" style="left:837px;top:436.2px;width:236px;height:1px;background:#ececec"></div>
<div class="t" style="top:448.56px;font-size:10.05px;color:#5c5c5c;left:850.4px;">8:15 PM</div>
<div class="t" style="top:462.76px;font-size:10.05px;color:#5c5c5c;left:850.4px;">1h</div>
<div class="abs" style="left:898.6px;top:444.3px;width:4.7px;height:26.599999999999966px;background:#e3008c;border-radius:2.4px"></div>
<div class="t" style="top:446.42px;font-size:12px;color:#242424;font-weight:700;left:910px;">Yoga</div>
<svg style="left:910.5px;top:461.09999999999997px;" width="7.4" height="8.8" viewBox="0 0 7.4 8.8" fill="none"><path d="M3.7.6A3.05 3.05 0 0 0 .65 3.65C.65 5.7 3.7 8.2 3.7 8.2s3.05-2.5 3.05-4.55A3.05 3.05 0 0 0 3.7.6z" stroke="#5c5c5c" stroke-width=".9" stroke-linejoin="round"/><circle cx="3.7" cy="3.7" r=".95" fill="#5c5c5c"/></svg>
<div class="t" style="top:461.08px;font-size:10px;color:#616161;letter-spacing:-0.14px;left:922.5px;">Contoso</div>
<div class="abs" style="left:837px;top:478.5px;width:236px;height:1px;background:#ececec"></div>
<div class="t" style="top:490.17px;font-size:10.02px;color:#616161;left:850.2px;">Tomorrow • September 15, 2020</div>
<div class="t" style="top:523.16px;font-size:10.05px;color:#5c5c5c;left:850.4px;">12:00PM</div>
<div class="t" style="top:536.56px;font-size:10.05px;color:#5c5c5c;left:850.4px;">1h</div>
<div class="abs" style="left:898.6px;top:518px;width:4.7px;height:26.799999999999955px;background:#0d70d0;border-radius:2.4px"></div>
<div class="t" style="top:520.18px;font-size:11.65px;color:#242424;font-weight:700;left:910px;">1:1 Robin / Katri</div>
<svg style="left:910.5px;top:535.3000000000001px;" width="7.4" height="8.8" viewBox="0 0 7.4 8.8" fill="none"><path d="M3.7.6A3.05 3.05 0 0 0 .65 3.65C.65 5.7 3.7 8.2 3.7 8.2s3.05-2.5 3.05-4.55A3.05 3.05 0 0 0 3.7.6z" stroke="#5c5c5c" stroke-width=".9" stroke-linejoin="round"/><circle cx="3.7" cy="3.7" r=".95" fill="#5c5c5c"/></svg>
<div class="t" style="top:535.28px;font-size:10px;color:#616161;letter-spacing:-0.1px;left:922.5px;">Soho</div>
<div class="abs" style="left:837px;top:552px;width:236px;height:1px;background:#ececec"></div>
<div class="t" style="top:564.96px;font-size:10.05px;color:#5c5c5c;left:850.4px;">1:30 PM</div>
<div class="t" style="top:578.96px;font-size:10.05px;color:#5c5c5c;left:850.4px;">1h</div>
<div class="abs" style="left:898.6px;top:560.4px;width:4.7px;height:27.300000000000068px;border-radius:2.4px;background:repeating-linear-gradient(-55deg,#2b7cd3 0 1.5px,#fff 1.5px 3.6px);box-shadow:inset 0 0 0 .8px #2b7cd3"></div>
<div class="t" style="top:561.53px;font-size:11.77px;color:#242424;font-weight:700;left:910px;">All Hands</div>
<svg style="left:910.5px;top:577.9000000000001px;" width="7.4" height="8.8" viewBox="0 0 7.4 8.8" fill="none"><path d="M3.7.6A3.05 3.05 0 0 0 .65 3.65C.65 5.7 3.7 8.2 3.7 8.2s3.05-2.5 3.05-4.55A3.05 3.05 0 0 0 3.7.6z" stroke="#5c5c5c" stroke-width=".9" stroke-linejoin="round"/><circle cx="3.7" cy="3.7" r=".95" fill="#5c5c5c"/></svg>
<div class="t" style="top:577.88px;font-size:10px;color:#616161;letter-spacing:-0.1px;left:922.5px;">Conf Room Wilkins</div>
<div class="abs" style="left:837px;top:595.3px;width:236px;height:1px;background:#ececec"></div>
<div class="abs" style="left:898.6px;top:602.6px;width:4.7px;height:20px;background:#0d70d0;border-radius:2.4px"></div>
<div id="dlg"><div class="bar"></div></div>
<div class="abs" style="left:272.7px;top:49.9px;width:9.5px;height:9.5px;background:#ec6a5e;border-radius:50%"></div>
<div class="abs" style="left:288.5px;top:49.9px;width:9.5px;height:9.5px;background:#f4bf4f;border-radius:50%"></div>
<div class="abs" style="left:304.1px;top:49.9px;width:9.5px;height:9.5px;background:#c6c6c6;border-radius:50%"></div>
<svg style="left:331.5px;top:49px;" width="8" height="12" viewBox="0 0 8 12" fill="none"><path d="M6.8 1 1.3 6l5.5 5" stroke="#333" stroke-width="1.3" stroke-linecap="round" stroke-linejoin="round"/></svg>
<svg style="left:359.5px;top:49px;" width="8" height="12" viewBox="0 0 8 12" fill="none"><path d="M1.2 1 6.7 6l-5.5 5" stroke="#b0b0b0" stroke-width="1.3" stroke-linecap="round" stroke-linejoin="round"/></svg>
<svg style="left:387px;top:47.6px;" width="14" height="14" viewBox="0 0 14 14" fill="none"><circle cx="1.6" cy="1.6" r="1.45" fill="#333"/><circle cx="1.6" cy="7" r="1.45" fill="#333"/><circle cx="1.6" cy="12.4" r="1.45" fill="#333"/><circle cx="7" cy="1.6" r="1.45" fill="#333"/><circle cx="7" cy="7" r="1.45" fill="#333"/><circle cx="7" cy="12.4" r="1.45" fill="#333"/><circle cx="12.4" cy="1.6" r="1.45" fill="#333"/><circle cx="12.4" cy="7" r="1.45" fill="#333"/><circle cx="12.4" cy="12.4" r="1.45" fill="#333"/></svg>
<div class="t" style="top:49.61px;font-size:11.8px;color:#2b2b2b;font-weight:700;left:368px;width:300px;text-align:center;">General</div>
<div class="abs" style="left:677.5px;top:44.5px;width:127.5px;height:20.2px;border:1px solid #dedede;border-radius:5px;background:#f8f8f8"></div>
<svg style="left:684px;top:47.8px;" width="12" height="12" viewBox="0 0 12 12" fill="none"><circle cx="5.2" cy="5.2" r="3.9" stroke="#4a4a4a" stroke-width="1"/><path d="M8.1 8.1 11.3 11.3" stroke="#4a4a4a" stroke-width="1" stroke-linecap="round"/></svg>
<div class="t" style="top:50.48px;font-size:10px;color:#a8a8a8;letter-spacing:-0.25px;left:702px;">Search</div>
<div class="t" style="top:98.82px;font-size:10.12px;color:#8a8a8a;left:374px;">Appearance settings here will only apply to All Accounts.</div>
<div class="t" style="top:98.88px;font-size:10px;color:#0f6cbd;letter-spacing:-0.08px;left:629.5px;">Manage Profiles</div>
<div class="t" style="top:153.22px;font-size:10.12px;color:#242424;font-weight:700;left:28.69999999999999px;width:400px;text-align:right;">Appearance:</div>
<div class="abs" style="left:441px;top:127.6px;width:74px;height:55.2px;border-radius:5.5px;background:#f1f0ef;overflow:hidden;box-shadow:0 0 2.5px .8px rgba(40,130,220,.45)">
<div class="abs" style="left:0;top:0;width:74px;height:12.3px;background:#0078d4"></div>
<div class="abs" style="left:18.8px;top:3.9px;width:36px;height:5.4px;border-radius:2.7px;background:#005a9e"></div>
<div class="abs" style="left:4px;top:16.8px;width:8px;height:8px;border-radius:50%;background:#cbcbcb"></div>
<div class="abs" style="left:3.7px;top:28.6px;width:12.4px;height:4.6px;border-radius:2.3px;background:#dedede"></div>
<div class="abs" style="left:3.7px;top:36.7px;width:12.4px;height:4.6px;border-radius:2.3px;background:#dedede"></div>
<div class="abs" style="left:18.8px;top:16px;width:53.6px;height:36.4px;border-radius:3px;background:#fff"></div>
<div class="abs" style="left:0;top:0;width:74px;height:55.2px;border:1.3px solid #0a74d2;border-radius:5.5px"></div>
</div>
<div class="abs" style="left:537.7px;top:127.6px;width:74px;height:55.2px;border-radius:5.5px;background:#3b3b3b;overflow:hidden">
<div class="abs" style="left:0;top:0;width:74px;height:12.3px;background:#454545"></div>
<div class="abs" style="left:18.8px;top:3.9px;width:36px;height:5.4px;border-radius:2.7px;background:#737373"></div>
<div class="abs" style="left:4px;top:16.8px;width:8px;height:8px;border-radius:50%;background:#6b6b6b"></div>
<div class="abs" style="left:3.7px;top:28.6px;width:12.4px;height:4.6px;border-radius:2.3px;background:#6b6b6b"></div>
<div class="abs" style="left:3.7px;top:36.7px;width:12.4px;height:4.6px;border-radius:2.3px;background:#6b6b6b"></div>
<div class="abs" style="left:18.8px;top:16px;width:53.6px;height:36.4px;border-radius:3px;background:#1f1f1f"></div>
</div>
<div class="abs" style="left:634.5px;top:127.6px;width:74px;height:55.2px;border-radius:5.5px;background:#f1f0ef;overflow:hidden;box-shadow:0 0 0 .5px rgba(0,0,0,.12)">
<div class="abs" style="left:0;top:0;width:74px;height:12.3px;background:#0078d4"></div>
<div class="abs" style="left:18.8px;top:3.9px;width:36px;height:5.4px;border-radius:2.7px;background:#005a9e"></div>
<div class="abs" style="left:4px;top:16.8px;width:8px;height:8px;border-radius:50%;background:#cbcbcb"></div>
<div class="abs" style="left:3.7px;top:28.6px;width:12.4px;height:4.6px;border-radius:2.3px;background:#dedede"></div>
<div class="abs" style="left:3.7px;top:36.7px;width:12.4px;height:4.6px;border-radius:2.3px;background:#dedede"></div>
<div class="abs" style="left:18.8px;top:16px;width:53.6px;height:36.4px;border-radius:3px;background:#fff"></div>
<div class="abs" style="left:35.5px;top:0;width:38.5px;height:55.2px;background:#3b3b3b;overflow:hidden">
 <div class="abs" style="left:0;top:0;width:38.5px;height:12.3px;background:#454545"></div>
 <div class="abs" style="left:-16.7px;top:3.9px;width:36px;height:5.4px;border-radius:2.7px;background:#737373"></div>
 <div class="abs" style="left:0;top:16px;width:36.9px;height:36.4px;border-radius:0 3px 3px 0;background:#1f1f1f"></div>
</div>
</div>
<div class="t" style="top:197.24px;font-size:10.49px;color:#242424;left:326.2px;width:300px;text-align:center;">Light Mode</div>
<div class="t" style="top:197.24px;font-size:10.49px;color:#242424;left:424.29999999999995px;width:300px;text-align:center;">Dark Mode</div>
<div class="t" style="top:197.24px;font-size:10.49px;color:#242424;left:519.4px;width:300px;text-align:center;">Auto</div>
<div class="t" style="top:229.21px;font-size:11.39px;color:#242424;left:28.399999999999977px;width:400px;text-align:right;">Themes by Copilot</div>
<svg style="left:314.4px;top:227px;" width="15.5" height="14" viewBox="0 0 15.5 14" fill="none"><g stroke="#3c3c3c" stroke-width=".9" stroke-linecap="round" stroke-linejoin="round"><path d="M9 .6H4.7C3.7.6 3 1.2 2.7 2.1L1 7.8C.7 8.9 1.3 9.6 2.3 9.6H4.8C5.6 9.6 6.2 9.2 6.4 8.5L8.9.8"/><path d="M9 .6h.7c.9 0 1.5.5 1.8 1.4l.7 2.1"/><path d="M9.5 4.1H13c1 0 1.6.8 1.3 1.8L12.6 11.7c-.3 1-1 1.7-2 1.7H6.7"/><path d="M9.5 4.1c-.7 0-1.1.4-1.3 1L6.1 12"/><path d="M2.3 9.6c1 0 1.7.3 2 1.1l.6 1.5c.3.8.9 1.2 1.8 1.2"/></g></svg>
<div class="t" style="top:260.21px;font-size:11.39px;color:#242424;left:28.399999999999977px;width:400px;text-align:right;">Color</div>
<div class="t" style="top:291.21px;font-size:11.39px;color:#242424;left:28.399999999999977px;width:400px;text-align:right;">Image</div>
<div class="t" style="top:322.21px;font-size:11.39px;color:#242424;left:28.399999999999977px;width:400px;text-align:right;">Pride</div>
<div class="abs" style="left:441px;top:222px;width:43.4px;height:24.5px;border-radius:5px;overflow:hidden;background:radial-gradient(ellipse 60% 75% at 52% -10%,#b5308f 0%,rgba(181,48,143,0) 100%),radial-gradient(ellipse 55% 90% at 105% 105%,#6f9a3e 0%,rgba(111,154,62,0) 100%),radial-gradient(ellipse 40% 60% at 100% 0%,#c04040 0%,rgba(192,64,64,0) 100%),linear-gradient(90deg,#c8402e 0%,#d65a2a 35%,#d2702e 60%,#b8823a 100%)"><svg style="left:14px;top:4.6px" width="15" height="15" viewBox="0 0 15 15" fill="none"><path d="M7.2 4.2h4.3a2 2 0 0 1 2 2v5.4a2 2 0 0 1-2 2H5.7a2 2 0 0 1-2-2V9.3" stroke="#fff" stroke-width=".95" stroke-linecap="round"/><path d="M4.3 12.9l3.6-3.5a1 1 0 0 1 1.4 0l3.6 3.5" stroke="#fff" stroke-width=".9" stroke-linejoin="round"/><circle cx="10.9" cy="7" r=".85" fill="#fff"/><path d="M5.4.3l.9 2.3 2.3.9-2.3.9-.9 2.3-.9-2.3-2.3-.9 2.3-.9z" fill="#fff"/><path d="M2.2 6.4l.5 1.3 1.3.5-1.3.5-.5 1.3-.5-1.3L.4 8.2l1.3-.5z" fill="#fff"/></svg></div>
<div class="abs" style="left:491.2px;top:222px;width:43.4px;height:24.5px;border-radius:5px;overflow:hidden;background:linear-gradient(100deg,#8fb4dc 0%,#5c93cf 30%,#4a84c6 60%,#6a9ad0 100%)"><svg style="left:0;top:0" width="43.4" height="24.5" viewBox="0 0 43.4 24.5"><defs><radialGradient id="sun"><stop offset="0" stop-color="#fffdf2"/><stop offset=".3" stop-color="#fdf0c4"/><stop offset="1" stop-color="#f6dcae" stop-opacity="0"/></radialGradient><filter id="bl" x="-20%" y="-20%" width="140%" height="140%"><feGaussianBlur stdDeviation=".9"/></filter><filter id="bl2" x="-20%" y="-20%" width="140%" height="140%"><feGaussianBlur stdDeviation=".5"/></filter></defs><circle cx="5.8" cy="7" r="9" fill="url(#sun)"/><g filter="url(#bl)"><ellipse cx="35" cy="5" rx="7" ry="4.5" fill="#dfe3ee"/><ellipse cx="38" cy="10" rx="6" ry="4" fill="#b9bdd2"/><ellipse cx="31" cy="9" rx="4" ry="3" fill="#eceef5"/><ellipse cx="27" cy="16" rx="5" ry="3" fill="#e4dfe8"/><ellipse cx="6" cy="22" rx="7" ry="3.5" fill="#e9d8d4"/><ellipse cx="20" cy="23" rx="9" ry="3" fill="#d9d3e2"/><ellipse cx="30" cy="22" rx="6" ry="3" fill="#c8c4dc"/></g><g filter="url(#bl2)"><ellipse cx="10" cy="13.6" rx="4.6" ry="2.3" fill="#e2b48c"/><ellipse cx="9.5" cy="15.2" rx="3.8" ry="1.3" fill="#9a6a52"/><ellipse cx="36" cy="17" rx="5.5" ry="2.6" fill="#dba486"/><ellipse cx="36.5" cy="19" rx="4.5" ry="1.4" fill="#9a6a5a"/><ellipse cx="15.5" cy="11" rx="1.6" ry="1" fill="#f0d2b4"/></g></svg></div>
<div class="abs" style="left:541.1px;top:222px;width:43.4px;height:24.5px;border-radius:5px;overflow:hidden;background:linear-gradient(180deg,#e9e2bd 0%,#cfdcc8 12%,#8fb7c9 22%,#86afc0 36%,#7fa39a 48%,#5d8f5c 70%,#43803c 100%)"><svg style="left:0;top:0" width="43.4" height="24.5" viewBox="0 0 43.4 24.5"><defs><filter id="bl3" x="-10%" y="-10%" width="120%" height="120%"><feGaussianBlur stdDeviation=".35"/></filter></defs><g filter="url(#bl3)"><path d="M0 5.5c5-1 9-1.5 14-1s9 0 14-1 10 0 15.4.5V7H0z" fill="#9dbccc"/><path d="M0 10c5-1 10-1 15 0v8H0z" fill="#3f7d70"/><path d="M0 14c6-2 12-1 18 1l-2 9.5H0z" fill="#3b7a4a"/><rect x="17" y="10" width="2" height="5" fill="#c9d6da"/><rect x="19.8" y="8.6" width="1.8" height="6.5" fill="#aebfc9"/><rect x="22.5" y="10.5" width="2.2" height="5" fill="#d5dedf"/><rect x="26" y="9" width="1.6" height="6" fill="#e6ecec"/><rect x="28.4" y="10" width="2" height="5.5" fill="#b9c8d0"/><rect x="31.5" y="9.6" width="1.8" height="6.4" fill="#dfe6e6"/><rect x="34" y="11" width="2.6" height="5" fill="#c4d0d4"/><rect x="37.5" y="12" width="3" height="4" fill="#d8dfdc"/><rect x="14" y="15" width="4" height="2" fill="#b9c9c4"/><rect x="36" y="18.5" width="4.5" height="3" fill="#d2dad2"/><rect x="22" y="17.5" width="5" height="1.6" fill="#a9bfae"/><path d="M8 19c8-2 16-1 22 1s10 2 13.4 1v3.5H4z" fill="#4d8a3a"/><path d="M16 21c6-1 12-1 18 0" stroke="#7fb05a" stroke-width=".9" fill="none"/></g></svg></div>
<div class="abs" style="left:441px;top:253.2px;width:43.4px;height:24.5px;border-radius:5px;overflow:hidden;background:#0f5aa6"><svg style="left:14.5px;top:6.5px" width="15" height="12" viewBox="0 0 15 12" fill="none"><path d="M1.2 6.4 5.2 10.4 13.8 1.4" stroke="#fff" stroke-width="1.35" stroke-linecap="round" stroke-linejoin="round"/></svg></div>
<div class="abs" style="left:491.2px;top:253.2px;width:43.4px;height:24.5px;border-radius:5px;overflow:hidden;background:#ff45a2"></div>
<div class="abs" style="left:541.1px;top:253.2px;width:43.4px;height:24.5px;border-radius:5px;overflow:hidden;background:#a10bf5"></div>
<div class="abs" style="left:591.2px;top:253.2px;width:43.4px;height:24.5px;border-radius:5px;overflow:hidden;background:#22a774"></div>
<div class="abs" style="left:641.2px;top:253.2px;width:43.4px;height:24.5px;border-radius:5px;overflow:hidden;background:#e60646"></div>
<div class="abs" style="left:691.2px;top:253.2px;width:43.4px;height:24.5px;border-radius:5px;overflow:hidden;background:#f74e1c"></div>
<svg width="0" height="0" style="left:0;top:0"><defs><filter id="blI" x="-10%" y="-10%" width="120%" height="120%"><feGaussianBlur stdDeviation=".45"/></filter><clipPath id="diag"><path d="M28.4 0H43.4V24.5H17.8z"/></clipPath></defs></svg>
<div class="abs" style="left:441px;top:284.2px;width:43.4px;height:24.5px;border-radius:5px;overflow:hidden;"><svg style="left:0;top:0" width="43.4" height="24.5" viewBox="0 0 43.4 24.5"><rect width="43.4" height="24.5" fill="#cfd3e8"/><g filter="url(#blI)"><rect width="43.4" height="9" fill="#b6bedb"/><rect y="7" width="43.4" height="5" fill="#dccfd6"/><path d="M0 13c4-3 8-5 12-3.5s9 3 16 2.5l4 12.5H0z" fill="#ebe9f0"/><path d="M4 12.5l5-2.5 6 3-6 1z" fill="#c9bfd4"/><path d="M0 17c6-1.5 12-1.5 18 0s8 2 12 2v5.5H0z" fill="#c3c6de"/><path d="M0 21c6-1 12-1 20 1v2.5H0z" fill="#b2b6d2"/></g><g clip-path="url(#diag)"><rect width="43.4" height="24.5" fill="#15171f"/><g filter="url(#blI)"><path d="M22 12c4-4 9-6 13-5s6 3 8.4 5v12.5H14z" fill="#343744"/><path d="M27 12c3-3 6-4 9-3 3 1 5 3 7.4 6v2c-3-3-6-5-9-5.5s-5 0-7.4 1.5z" fill="#a64a3a"/><path d="M14 24.5c4-5 9-8 15-8s10 2 14.4 5v3z" fill="#23252f"/></g></g></svg></div>
<div class="abs" style="left:491.2px;top:284.2px;width:43.4px;height:24.5px;border-radius:5px;overflow:hidden;"><svg style="left:0;top:0" width="43.4" height="24.5" viewBox="0 0 43.4 24.5"><rect width="43.4" height="24.5" fill="#e7d3e1"/><g filter="url(#blI)"><defs><radialGradient id="sph" cx=".55" cy=".2" r=".95"><stop offset="0" stop-color="#f0b070"/><stop offset=".35" stop-color="#f45aa4"/><stop offset=".8" stop-color="#d42ab4"/><stop offset="1" stop-color="#8a1fb0"/></radialGradient><radialGradient id="sph2" cx=".4" cy=".35" r=".8"><stop offset="0" stop-color="#4a2a7c"/><stop offset=".7" stop-color="#1c1038"/><stop offset="1" stop-color="#6a3ad0"/></radialGradient></defs><circle cx="14.6" cy="12.5" r="7.8" fill="url(#sph)"/></g><g clip-path="url(#diag)"><rect width="43.4" height="24.5" fill="#0e0a25"/><g filter="url(#blI)"><circle cx="14.6" cy="12.5" r="7.8" fill="url(#sph)"/><circle cx="30.2" cy="13.9" r="5.7" fill="url(#sph2)"/><ellipse cx="23" cy="17" rx="3" ry="4" fill="#5a22c8" opacity=".8"/><circle cx="25.2" cy="17.4" r="2" fill="#fbd2f4"/><circle cx="33" cy="8.2" r="1.6" fill="#f7b4dc"/><circle cx="22.4" cy="7" r="1.3" fill="#f4e4f0"/><circle cx="37" cy="6" r=".8" fill="#c05aa0"/></g></g></svg></div>
<div class="abs" style="left:541.1px;top:284.2px;width:43.4px;height:24.5px;border-radius:5px;overflow:hidden;"><svg style="left:0;top:0" width="43.4" height="24.5" viewBox="0 0 43.4 24.5"><rect width="43.4" height="24.5" fill="#b88896"/><g filter="url(#blI)"><rect width="43.4" height="5" fill="#9a98b8"/><rect y="3.5" width="43.4" height="5" fill="#dca6b4"/><path d="M0 3.5c4 0 8 1.5 12 4l6 3H0z" fill="#c24a4a"/><path d="M0 8c4 0 9 1 14 3l8 2-8 11.5H0z" fill="#7a4a58"/><path d="M10 9.5c5 0 9 1 14 3l-4 12H6c4-5 5-10 4-15z" fill="#5f4a5e"/><path d="M14 10c3 0 6 .5 9 2l-3 8c-2-4-4-7-6-10z" fill="#8a6a80"/></g><g clip-path="url(#diag)"><rect width="43.4" height="24.5" fill="#4a404a"/><g filter="url(#blI)"><rect width="43.4" height="9" fill="#84687e"/><path d="M27 9.5c5-4 11-4.5 16.4-2.5v8c-6-3-12-3-18-1z" fill="#5e6a44"/><path d="M29 8.5c4-2.5 9-3 14.4-1v2c-5-1.5-9-1.5-14.4.5z" fill="#b4606a"/><path d="M14 24.5l11-13.5c6-1 12 0 18.4 3v10.5z" fill="#4c4450"/><path d="M24 12c4-.5 8 0 12 1.5l-14 11z" fill="#5a5060"/></g></g></svg></div>
<div class="abs" style="left:591.2px;top:284.2px;width:43.4px;height:24.5px;border-radius:5px;overflow:hidden;"><svg style="left:0;top:0" width="43.4" height="24.5" viewBox="0 0 43.4 24.5"><rect width="43.4" height="24.5" fill="#f9bcac"/><g filter="url(#blI)"><circle cx="12.5" cy="4.5" r="4.2" fill="#f273b4"/><circle cx="8.2" cy="18" r="4.6" fill="#f284ac"/><path d="M5 5l18 16" stroke="#e85a9a" stroke-width="2.4" stroke-linecap="round"/><path d="M19 5l-5 15" stroke="#e9c6e0" stroke-width="1.8" stroke-linecap="round"/><path d="M12 17l8 5" stroke="#5a7ab0" stroke-width="1.6" stroke-linecap="round"/></g><g clip-path="url(#diag)"><rect width="43.4" height="24.5" fill="#1c1110"/><g filter="url(#blI)"><ellipse cx="33" cy="9" rx="6.5" ry="4.5" fill="none" stroke="#050505" stroke-width="3"/><path d="M22 17c5 1 11-1 15-6" stroke="#2b4f86" stroke-width="2.2" fill="none"/><path d="M20 20c6 2 13 0 18-5" stroke="#e6cdb4" stroke-width="1.3" fill="none"/><path d="M17 14l8 7" stroke="#d4568e" stroke-width="2.2" stroke-linecap="round"/><path d="M19 5l-4 13" stroke="#d8b4d0" stroke-width="1.6" stroke-linecap="round"/><rect x="32" y="14" width="12" height="11" fill="#2a1814"/></g></g></svg></div>
<div class="abs" style="left:641.2px;top:284.2px;width:43.4px;height:24.5px;border-radius:5px;overflow:hidden;"><svg style="left:0;top:0" width="43.4" height="24.5" viewBox="0 0 43.4 24.5"><rect width="43.4" height="24.5" fill="#3f9bb0"/><g filter="url(#blI)"><rect width="43.4" height="7" fill="#7cc4cc"/><rect y="6" width="43.4" height="3" fill="#b8d8cc"/><path d="M0 9h30v7H0z" fill="#35a0b2"/><path d="M6 12c6-2.5 13-2.5 20 0l-2 2.5c-5-1.5-10-1.5-16 .5z" fill="#ead0aa"/><path d="M0 16c8-1 14 0 22 2v6.5H0z" fill="#1d5c72"/><path d="M0 20c5-1.5 10-1 16 1v3.5H0z" fill="#15323e"/><path d="M8 18.5c3-.8 6-.8 9 0" stroke="#e88a5a" stroke-width="1" fill="none"/></g><g clip-path="url(#diag)"><rect width="43.4" height="24.5" fill="#2a2030"/><g filter="url(#blI)"><rect width="43.4" height="10" fill="#57284a"/><rect y="8" width="43.4" height="4" fill="#7a3a52"/><path d="M20 12c6-1.5 14-1.5 23.4 0v6H18z" fill="#1f4450"/><path d="M28 17.5c1.5-3 4-4.5 6.5-4s4 2.5 3.5 5z" fill="#f0845a"/><path d="M30 17.5c1-1.5 2.5-2.5 4-2.3" stroke="#ffd9a6" stroke-width="1" fill="none"/><path d="M14 24.5l4-6.5c8-.5 16 0 25.4 1.5v5z" fill="#11222a"/></g></g></svg></div>
<div class="abs" style="left:441px;top:315.4px;width:43.4px;height:24.5px;border-radius:5px;overflow:hidden;background:linear-gradient(180deg,#e0483a 0% 16.67%,#ef8a34 16.67% 33.33%,#f3c94d 33.33% 50%,#43a45c 50% 66.67%,#3f70d8 66.67% 83.33%,#7b4ebd 83.33% 100%)"></div>
<div class="abs" style="left:491.2px;top:315.4px;width:43.4px;height:24.5px;border-radius:5px;overflow:hidden;background:linear-gradient(180deg,#74cdf0 0% 20%,#f598c0 20% 40%,#ffffff 40% 60%,#f598c0 60% 80%,#74cdf0 80% 100%)"></div>
<div class="abs" style="left:541.1px;top:315.4px;width:43.4px;height:24.5px;border-radius:5px;overflow:hidden;background:linear-gradient(180deg,#d9512c 0% 20%,#ef8d3a 20% 40%,#ffffff 40% 60%,#e57db2 60% 80%,#a7316d 80% 100%)"></div>
<div class="abs" style="left:591.2px;top:315.4px;width:43.4px;height:24.5px;border-radius:5px;overflow:hidden;background:linear-gradient(180deg,#e77fc4 0% 40%,#7b4fd0 40% 62%,#3f70e2 62% 100%)"></div>
<div class="abs" style="left:641.2px;top:315.4px;width:43.4px;height:24.5px;border-radius:5px;overflow:hidden;background:linear-gradient(180deg,#f4cf60 0% 25%,#ffffff 25% 50%,#7a50c8 50% 75%,#262626 75% 100%)"></div>
<div class="abs" style="left:441.3px;top:357.8px;width:14.2px;height:14.2px;background:#0b6fcc;border-radius:3px"></div>
<svg style="left:443.8px;top:360.8px;" width="10" height="8" viewBox="0 0 10 8" fill="none"><path d="M1 4.2 3.7 6.9 9 1.2" stroke="#fff" stroke-width="1.4" stroke-linecap="round" stroke-linejoin="round"/></svg>
<div class="t" style="top:360.39px;font-size:10.4px;color:#242424;left:464.2px;">Enable window transparency</div>
<div class="abs" style="left:290.3px;top:390px;width:495.5px;height:1px;background:#e2e2e2"></div>
<div class="t" style="top:412.27px;font-size:10.23px;color:#242424;font-weight:700;left:11.199999999999989px;width:400px;text-align:right;">Density preference:</div>
<div class="abs" style="left:427.9px;top:406.6px;width:73.5px;height:55px;border-radius:5px;background:#efefef;box-shadow:0 0 0 .6px #86b8ea,0 0 3px 1.1px rgba(70,145,225,.7);"><div class="abs" style="left:2.8px;top:3.6px;width:67.6px;height:22.5px;border-radius:5px;background:#fff"></div><div class="abs" style="left:7px;top:10.6px;width:58.3px;height:9.2px;border-radius:4.6px;background:#d6d6d6"></div><div class="abs" style="left:2.8px;top:29.9px;width:67.6px;height:22.5px;border-radius:5px;background:#fff"></div><div class="abs" style="left:7px;top:36.9px;width:58.3px;height:9.2px;border-radius:4.6px;background:#d6d6d6"></div></div>
<div class="abs" style="left:520.6px;top:406.6px;width:73.5px;height:55px;border-radius:5px;background:#efefef;box-shadow:0 1.5px 3px rgba(0,0,0,.22),0 0 0 .5px rgba(0,0,0,.05);"><div class="abs" style="left:3.4px;top:2.8px;width:66.8px;height:14px;border-radius:5px;background:#fff"></div><div class="abs" style="left:8.2px;top:6.8px;width:58.3px;height:6.2px;border-radius:3.1px;background:#d6d6d6"></div><div class="abs" style="left:3.4px;top:20.2px;width:66.8px;height:14px;border-radius:5px;background:#fff"></div><div class="abs" style="left:8.2px;top:24.2px;width:58.3px;height:6.2px;border-radius:3.1px;background:#d6d6d6"></div><div class="abs" style="left:3.4px;top:37.2px;width:66.8px;height:14px;border-radius:5px;background:#fff"></div><div class="abs" style="left:8.2px;top:41.2px;width:58.3px;height:6.2px;border-radius:3.1px;background:#d6d6d6"></div></div>
<div class="abs" style="left:612.8px;top:406.6px;width:73.5px;height:55px;border-radius:5px;background:#efefef;box-shadow:0 1.5px 3px rgba(0,0,0,.22),0 0 0 .5px rgba(0,0,0,.05);"><div class="abs" style="left:3.4px;top:2px;width:66.8px;height:11px;border-radius:5px;background:#fff"></div><div class="abs" style="left:8px;top:5.3px;width:58.3px;height:4.5px;border-radius:2.25px;background:#d6d6d6"></div><div class="abs" style="left:3.4px;top:15.7px;width:66.8px;height:11px;border-radius:5px;background:#fff"></div><div class="abs" style="left:8px;top:19px;width:58.3px;height:4.5px;border-radius:2.25px;background:#d6d6d6"></div><div class="abs" style="left:3.4px;top:29px;width:66.8px;height:11px;border-radius:5px;background:#fff"></div><div class="abs" style="left:8px;top:32.3px;width:58.3px;height:4.5px;border-radius:2.25px;background:#d6d6d6"></div><div class="abs" style="left:3.4px;top:42.3px;width:66.8px;height:11px;border-radius:5px;background:#fff"></div><div class="abs" style="left:8px;top:45.599999999999994px;width:58.3px;height:4.5px;border-radius:2.25px;background:#d6d6d6"></div></div>
<div class="t" style="top:481px;font-size:10.59px;color:#242424;left:313.2px;width:300px;text-align:center;">Comfortable</div>
<div class="t" style="top:481px;font-size:10.59px;color:#242424;left:408.5px;width:300px;text-align:center;">Medium</div>
<div class="t" style="top:478.8px;font-size:10.59px;color:#242424;left:500.4px;width:300px;text-align:center;">Compact</div>
<div class="t" style="top:517.63px;font-size:10.1px;color:#242424;font-weight:700;left:12.300000000000011px;width:400px;text-align:right;">Text display size:</div>
<div class="abs" style="left:428.1px;top:507.2px;width:64.5px;height:28.6px;background:#fff;border:1px solid #e2e2e2;border-radius:5px"></div>
<div class="abs" style="left:459.5px;top:508px;width:1px;height:27px;background:#e2e2e2"></div>
<svg style="left:439.3px;top:516px;" width="11" height="11" viewBox="0 0 11 11" fill="none"><path d="M0 5.4h10.7" stroke="#333" stroke-width="1.2"/></svg>
<svg style="left:470px;top:515.4px;" width="12" height="12" viewBox="0 0 12 12" fill="none"><path d="M6 .3v11.4M.3 6h11.4" stroke="#666" stroke-width="1"/></svg>
<div class="t" style="top:518.14px;font-size:10.29px;color:#333;left:500.7px;">Default</div>
</div>
</body>
</html>
